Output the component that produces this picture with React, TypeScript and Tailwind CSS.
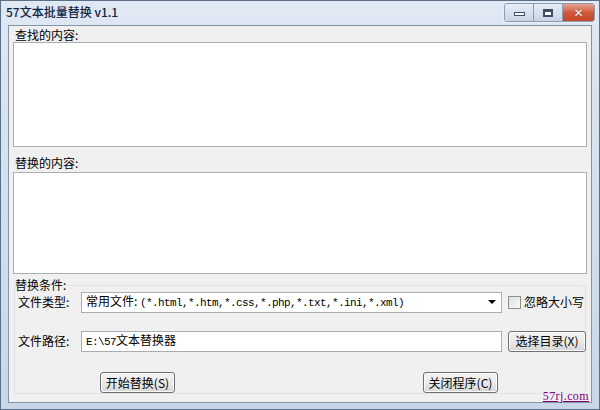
const ui = { fontFamily: '"Noto Sans CJK SC", "Liberation Sans", sans-serif' };
const mono = { fontFamily: '"Liberation Mono", "Noto Sans CJK SC", monospace' };

function WinButton({ label, className = '' }: { label: string; className?: string }) {
    return (
        <button
            className={`h-[21px] rounded-[3px] border border-[#707070] bg-gradient-to-b from-[#f2f2f2] via-[#ebebeb] to-[#d6d6d6] text-[12px] leading-none text-black shadow-[inset_0_0_0_1px_#fcfcfc] ${className}`}
            style={ui}
        >
            {label}
        </button>
    );
}

export default function App() {
    return (
        <div className="w-[600px] h-[410px] flex flex-col bg-gradient-to-b from-[#dfe8f3] to-[#c8d6e8] border border-[#5b6f86] overflow-hidden" style={ui}>
            {/* title bar */}
            <div className="h-[24px] shrink-0 flex items-start justify-between pl-[5px] pr-[4px]">
                <span className="mt-[5px] text-[12px] leading-none font-medium text-[#10253f]">57文本批量替换 v1.1</span>
                <div className="flex mt-[2px] rounded-[3px] border border-[#8a9bb0] overflow-hidden shadow-[0_0_0_1px_#e8eef6]">
                    <div className="w-[29px] h-[17px] flex items-center justify-center bg-gradient-to-b from-[#e6edf6] to-[#c7d5e6] border-r border-[#8a9bb0]">
                        <div className="w-[11px] h-[4px] bg-white border border-[#3c4e66] mt-[3px]" />
                    </div>
                    <div className="w-[29px] h-[17px] flex items-center justify-center bg-gradient-to-b from-[#e6edf6] to-[#c7d5e6] border-r border-[#8a9bb0]">
                        <div className="w-[10px] h-[8px] border-[2px] border-[#3c4e66] border-t-[3px] bg-white" />
                    </div>
                    <div className="w-[31px] h-[17px] flex items-center justify-center bg-gradient-to-b from-[#e8a493] via-[#d0583c] to-[#c44625]">
                        <span className="text-white text-[12px] font-bold leading-none" style={{ fontFamily: '"DejaVu Sans", sans-serif', textShadow: '0 0 1px #5a1a0a' }}>✕</span>
                    </div>
                </div>
            </div>

            {/* client area */}
            <div className="flex-1 mx-[7px] mb-[6px] border border-[#8495a8] bg-[#f0f0f0] flex flex-col text-[12px] text-black relative">
                <div className="pl-[6px] pt-[2px] h-[16px] leading-[14px]">查找的内容:</div>
                <div className="mx-[4px] h-[105px] border border-[#abadb3] bg-white" />
                <div className="pl-[6px] mt-[9px] h-[16px] leading-[14px]">替换的内容:</div>
                <div className="mx-[4px] h-[102px] border border-[#abadb3] bg-white" />

                {/* group */}
                <div className="mt-[4px] mx-[2px] h-[96px] relative">
                    <div className="absolute left-[3px] right-[3px] top-[7px] bottom-[-20px] border border-[#dde3e8] rounded-[3px]" />
                    <div className="relative pl-[4px] leading-[14px]">
                        <span className="bg-[#f0f0f0] pr-[2px]">替换条件:</span>
                    </div>
                    <div className="relative flex items-center mt-[-1px] h-[22px]">
                        <span className="w-[70px] pl-[7px]">文件类型:</span>
                        <div className="w-[421px] h-[21px] border border-[#abadb3] bg-white flex items-center pl-[4px] pr-[5px]">
                            <span className="flex-1 text-[11px] tracking-[-0.6px] leading-none whitespace-nowrap" style={mono}>
                                <span style={ui} className="text-[12px] tracking-normal">常用文件: </span>(*.html,*.htm,*.css,*.php,*.txt,*.ini,*.xml)
                            </span>
                            <span className="w-0 h-0 border-l-[4px] border-r-[4px] border-t-[4px] border-l-transparent border-r-transparent border-t-black" />
                        </div>
                        <div className="ml-[6px] w-[13px] h-[13px] border border-[#8e8f8f] bg-gradient-to-br from-[#dcdcdc] to-[#fbfbfb]" />
                        <span className="ml-[3px]">忽略大小写</span>
                    </div>
                    <div className="relative flex items-center mt-[17px] h-[22px]">
                        <span className="w-[70px] pl-[7px]">文件路径:</span>
                        <div className="w-[421px] h-[21px] border border-[#abadb3] bg-white flex items-center pl-[4px]">
                            <span className="text-[11px] tracking-[-0.6px] leading-none" style={mono}>E:\57<span style={ui} className="text-[12px] tracking-normal">文本替换器</span></span>
                        </div>
                        <WinButton label="选择目录(X)" className="ml-[6px] w-[78px]" />
                    </div>
                </div>

                {/* bottom buttons */}
                <div className="relative flex mt-[-2px]">
                    <WinButton label="开始替换(S)" className="ml-[91px] w-[75px]" />
                    <WinButton label="关闭程序(C)" className="ml-[248px] w-[75px]" />
                </div>
                <a className="absolute right-[2px] bottom-[0px] text-[12px] leading-none text-[#800080] underline tracking-[0.4px]" style={{ fontFamily: '"Liberation Serif", serif' }}>57rj.com</a>
            </div>
        </div>
    );
}
